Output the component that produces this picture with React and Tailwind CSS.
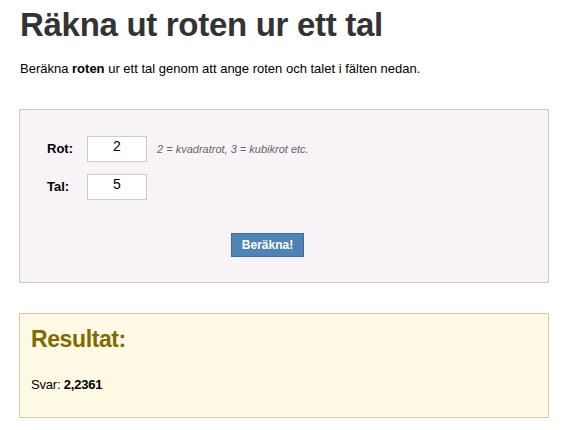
export default function App() {
  return (
    <div className="min-h-[430px] bg-white px-[19px] text-black" style={{ fontFamily: '"Liberation Sans", Arial, sans-serif' }}>
      <h1 className="pt-[8px] pl-px text-[33px] font-bold leading-[33px] tracking-[-0.3px] text-[#333]">
        Räkna ut roten ur ett tal
      </h1>

      <p className="mt-[20px] pl-px text-[13px] leading-[16px]">
        Beräkna <b>roten</b> ur ett tal genom att ange roten och talet i fälten nedan.
      </p>

      <div className="mt-[32px] h-[174px] w-[530px] border border-[#cccccc] bg-[#f7f3f7] pt-[26px]">
        <div className="flex items-center">
          <span className="w-[40px] pl-[27px] box-content text-[13px] font-bold">Rot:</span>
          <Field value="2" />
          <span className="ml-[10px] text-[11px] italic text-[#666]">2 = kvadratrot, 3 = kubikrot etc.</span>
        </div>
        <div className="mt-[12px] flex items-center">
          <span className="w-[40px] pl-[27px] box-content text-[13px] font-bold">Tal:</span>
          <Field value="5" />
        </div>
        <div className="mt-[32px] pl-[211px]">
          <button className="h-[24px] w-[73px] border border-[#3d6d99] bg-[#4f83b3] text-[12px] font-bold text-white">
            Beräkna!
          </button>
        </div>
      </div>

      <div className="mt-[30px] h-[105px] w-[530px] border border-[#d5cba8] bg-[#fff9e6] px-[11px] pt-[12px]">
        <h2 className="text-[23px] font-bold leading-[26px] tracking-[-0.4px] text-[#7d6b00]">Resultat:</h2>
        <p className="mt-[25px] text-[13px] leading-[16px] tracking-[-0.2px]">
          Svar: <b>2,2361</b>
        </p>
      </div>
    </div>
  );
}

function Field({ value }) {
  return (
    <div className="flex h-[26px] w-[60px] justify-center border border-[#cccccc] bg-white pt-[1px] text-[14px] leading-[16px]">
      {value}
    </div>
  );
}
